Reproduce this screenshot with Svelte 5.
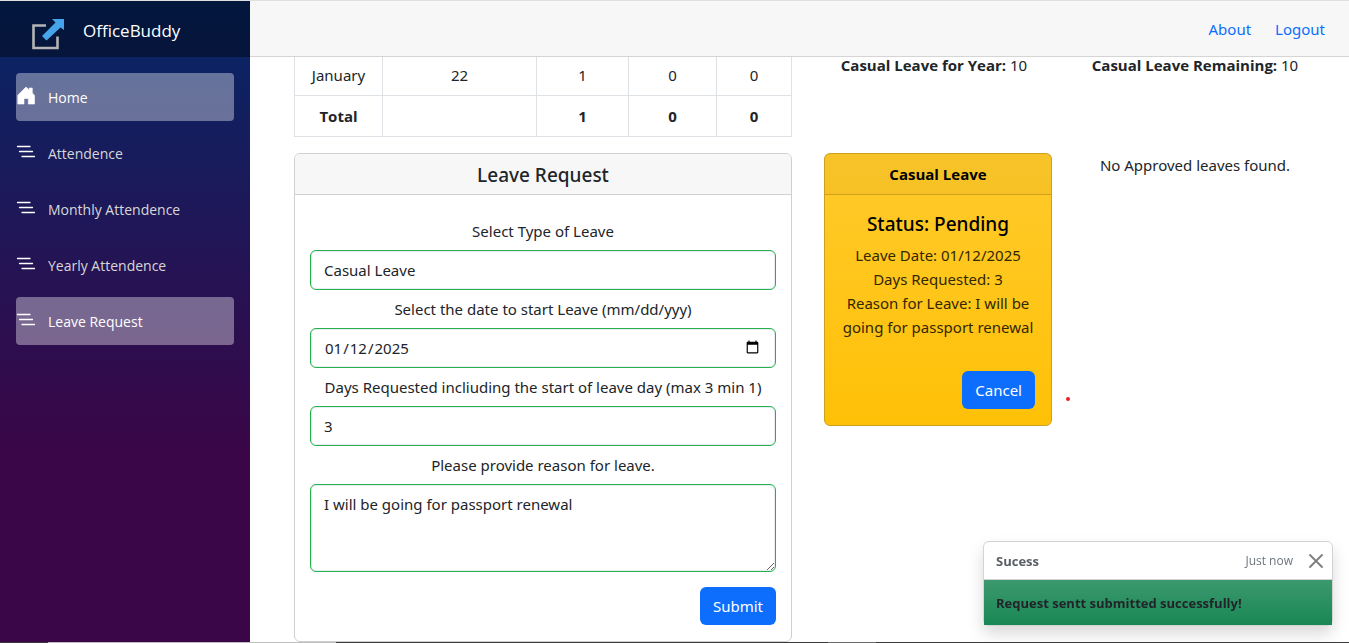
<script>
  let leaveType = $state('Casual Leave');
  let startDate = $state('2025-01-12');
  let days = $state('3');
  let reason = $state('I will be going for passport renewal');

  const links = [
    { label: 'Home', icon: 'home', active: true },
    { label: 'Attendence', icon: 'lines' },
    { label: 'Monthly Attendence', icon: 'lines' },
    { label: 'Yearly Attendence', icon: 'lines' },
    { label: 'Leave Request', icon: 'lines', active: true },
  ];
</script>

<div class="page">
  <aside class="sidebar">
    <div class="brand">
      <svg width="32" height="32" viewBox="0 0 32 32" aria-hidden="true">
        <path d="M14 7.500H1.500V30H25.500V18.500" fill="none" stroke="#b4b4b4" stroke-width="2.600" />
        <path d="M20 1H32V12L28.500 9.500L14.500 22.500L10 18L23.500 4.500Z" fill="#46a5ea" />
      </svg>
      <a href="#home">OfficeBuddy</a>
    </div>
    <nav>
      {#each links as link}
        <a href="#{link.label}" class:active={link.active}>
          {#if link.icon === 'home'}
            <svg width="20" height="20" viewBox="0 0 20 20" fill="#fff" aria-hidden="true">
              <path d="M10 2L13.300 5V3H16.300V8L18.500 10.200V19H12.300V13.500H8V19H1.800V10.200Z" stroke="#fff" stroke-width=".6" stroke-linejoin="round" />
            </svg>
          {:else}
            <svg width="20" height="20" viewBox="0 0 20 20" stroke="#fff" stroke-width="1.300" stroke-linecap="round" aria-hidden="true">
              <path d="M1.500 5.500H14M3.500 10.500H16.500M6 15.500H18.500" />
            </svg>
          {/if}
          <span>{link.label}</span>
        </a>
      {/each}
    </nav>
  </aside>

  <div class="content">
    <header>
      <a href="#about">About</a>
      <a href="#logout">Logout</a>
    </header>

    <main>
      <section class="summary">
        <table>
          <tbody>
            <tr><td>January</td><td>22</td><td>1</td><td>0</td><td>0</td></tr>
            <tr class="total"><td>Total</td><td></td><td>1</td><td>0</td><td>0</td></tr>
          </tbody>
        </table>
        <p><b>Casual Leave for Year:</b> 10</p>
        <p><b>Casual Leave Remaining:</b> 10</p>
      </section>

      <section class="requests">
        <form class="card">
          <h5>Leave Request</h5>
          <div class="fields">
            <label for="type">Select Type of Leave</label>
            <select id="type" bind:value={leaveType}>
              <option>Casual Leave</option>
              <option>Sick Leave</option>
            </select>
            <label for="date">Select the date to start Leave (mm/dd/yyy)</label>
            <input id="date" type="date" bind:value={startDate} />
            <label for="days">Days Requested incliuding the start of leave day (max 3 min 1)</label>
            <input id="days" type="text" bind:value={days} />
            <label for="reason">Please provide reason for leave.</label>
            <textarea id="reason" bind:value={reason}></textarea>
            <button type="button" class="btn">Submit</button>
          </div>
        </form>

        <article class="pending">
          <h6>Casual Leave</h6>
          <div class="details">
            <h5>Status: Pending</h5>
            <p>Leave Date: 01/12/2025<br />Days Requested: 3<br />Reason for Leave: I will be going for passport renewal</p>
            <button type="button" class="btn">Cancel</button>
          </div>
          <span class="dot"></span>
        </article>

        <p class="approved">No Approved leaves found.</p>
      </section>
    </main>
  </div>

  <div class="toast" role="status">
    <div class="toast-head">
      <strong>Sucess</strong>
      <small>Just now</small>
      <button type="button" aria-label="Close">
        <svg width="14" height="14" viewBox="0 0 14 14" stroke="#7d7d7d" stroke-width="1.800" stroke-linecap="round" aria-hidden="true">
          <path d="M1 1L13 13M13 1L1 13" />
        </svg>
      </button>
    </div>
    <div class="toast-body">Request sentt submitted successfully!</div>
  </div>
</div>

<style>
  :global(*) { box-sizing: border-box; }
  :global(body) { overflow: hidden; }

  .page {
    --sans: "Segoe UI", "Noto Sans", "Open Sans", sans-serif;
    --bold: "Segoe UI", "Open Sans", "Noto Sans", sans-serif;
    position: relative;
    display: flex;
    height: 100vh;
    overflow: hidden;
    border-top: 1px solid #dfe1e1;
    font: 15px/24px var(--sans);
    color: #212529;
    background: #fff;
  }
  .page::after {
    content: "";
    position: absolute;
    inset: auto 0 0;
    height: 1px;
    background: linear-gradient(90deg, #3a3a3a 48px, #bdbdbd 48px 336px, #3a3a3a 336px 828px, #6a6a6a 828px 876px, #3a3a3a 876px);
  }
  a { text-decoration: none; }
  p, h5, h6 { margin: 0; }

  .sidebar {
    flex: 0 0 250px;
    background: linear-gradient(180deg, rgb(5, 39, 103) 0%, #3a0647 70%);
  }
  .brand {
    display: flex;
    align-items: center;
    gap: 19px;
    height: 56px;
    padding: 6px 32px 0;
    background: rgba(0, 0, 0, 0.4);
  }
  .brand svg { margin-top: 4px; }
  .brand a { padding-bottom: 2px; color: #fff; font-family: var(--bold); font-size: 17px; }
  nav {
    display: flex;
    flex-direction: column;
    gap: 8px;
    padding: 16px;
  }
  nav a {
    display: flex;
    align-items: center;
    gap: 12px;
    height: 48px;
    border-radius: 4px;
    color: #d7d7d7;
    font-family: var(--bold);
    font-size: 14px;
  }
  nav svg { margin-bottom: 4px; }
  nav a span { padding-top: 2px; }
  nav a.active { background: rgba(255, 255, 255, 0.37); color: #fff; }

  .content { flex: 1; min-width: 0; }
  header {
    display: flex;
    height: 56px;
    align-items: center;
    justify-content: flex-end;
    gap: 24px;
    padding: 0 24px;
    background: #f7f7f7;
    border-bottom: 1px solid #d6d5d5;
  }
  header a { color: #0d6efd; }

  main { padding: 0 19px 0 44px; text-align: center; }
  .summary {
    display: grid;
    grid-template-columns: 514fr 252fr 270fr;
  }
  .summary p { line-height: 16px; }
  table {
    width: calc(100% - 16px);
    border-collapse: collapse;
    table-layout: fixed;
  }
  td {
    height: 41px;
    padding: 0;
    border: 1px solid #dee2e6;
  }
  tr:first-child td { height: 38px; padding-bottom: 2px; border-top: 0; }
  td:nth-child(1) { width: 88px; }
  td:nth-child(2) { width: 31%; }
  td:nth-child(3) { width: 92px; }
  td:nth-child(4) { width: 88px; }
  .total, b, h6 { font-family: var(--bold); font-weight: 700; }

  .requests {
    display: grid;
    grid-template-columns: 514fr 260fr 262fr;
    align-items: start;
    margin-top: 16px;
  }
  .card {
    margin-right: 16px;
    border: 1px solid #d0d0d0;
    border-radius: 6px;
    background: #fff;
  }
  .card > h5 {
    padding: 9px 0 7px;
    border-bottom: 1px solid #d0d0d0;
    border-radius: 5px 5px 0 0;
    background: #f7f7f7;
  }
  h5 { font-size: 19px; font-weight: 500; line-height: 24px; }
  .fields {
    display: flex;
    flex-direction: column;
    padding: 24px 15px 16px;
  }
  label { line-height: 24px; margin-bottom: 7px; }
  .fields input, select, textarea {
    width: 100%;
    height: 40px;
    margin: 0 0 7px;
    padding: 7px 13px;
    border: 1px solid #22b14c;
    border-radius: 6px;
    outline: 0;
    appearance: none;
    background: #fff;
    box-shadow: inset 0 0 0 1px #e9ecf0;
    color: #212529;
    font: inherit;
  }
  .fields textarea { height: 88px; margin-bottom: 15px; resize: vertical; }
  .btn {
    align-self: flex-end;
    height: 38px;
    padding: 0 13px;
    border: 0;
    border-radius: 6px;
    background: #0d6efd;
    color: #fff;
    font: inherit;
  }

  .pending {
    position: relative;
    margin: 0 16px;
    border: 1px solid #cda11b;
    border-radius: 6px;
    background: linear-gradient(180deg, #ffca2c, #ffc107);
    color: #000;
  }
  .pending h6 {
    padding: 8px 0;
    border-bottom: 1px solid #cda11b;
    background: rgba(0, 0, 0, 0.03);
    font-size: 15px;
    line-height: 24px;
  }
  .details { display: flex; flex-direction: column; padding: 17px 16px 16px; }
  .details h5 { margin-bottom: 7px; }
  .details p { margin: 0 -8px 32px; color: #332701; }
  .dot {
    position: absolute;
    right: -19px;
    bottom: 24px;
    width: 4px;
    height: 4px;
    border-radius: 50%;
    background: #ed1c24;
  }
  .approved { padding-right: 8px; }

  .toast {
    position: fixed;
    right: 16px;
    bottom: 17px;
    width: 350px;
    border: 1px solid #d3d3d3;
    border-radius: 6px;
    box-shadow: 0 8px 16px rgba(0, 0, 0, 0.15);
    background: #fff;
    font-family: var(--bold);
    font-size: 13px;
    line-height: 22px;
  }
  .toast-head {
    display: flex;
    align-items: center;
    height: 38px;
    padding: 0 9px 0 12px;
    border-bottom: 1px solid #d3d3d3;
    color: #595f64;
  }
  .toast-head strong { margin-right: auto; }
  .toast-head small { font-size: 12px; color: #6c757d; }
  .toast-head button {
    display: flex;
    margin-left: 16px;
    padding: 0;
    border: 0;
    background: none;
  }
  .toast-body {
    padding: 12px 12px 11px;
    background: linear-gradient(180deg, #3c996e, #198754);
    font-weight: 700;
  }
</style>
